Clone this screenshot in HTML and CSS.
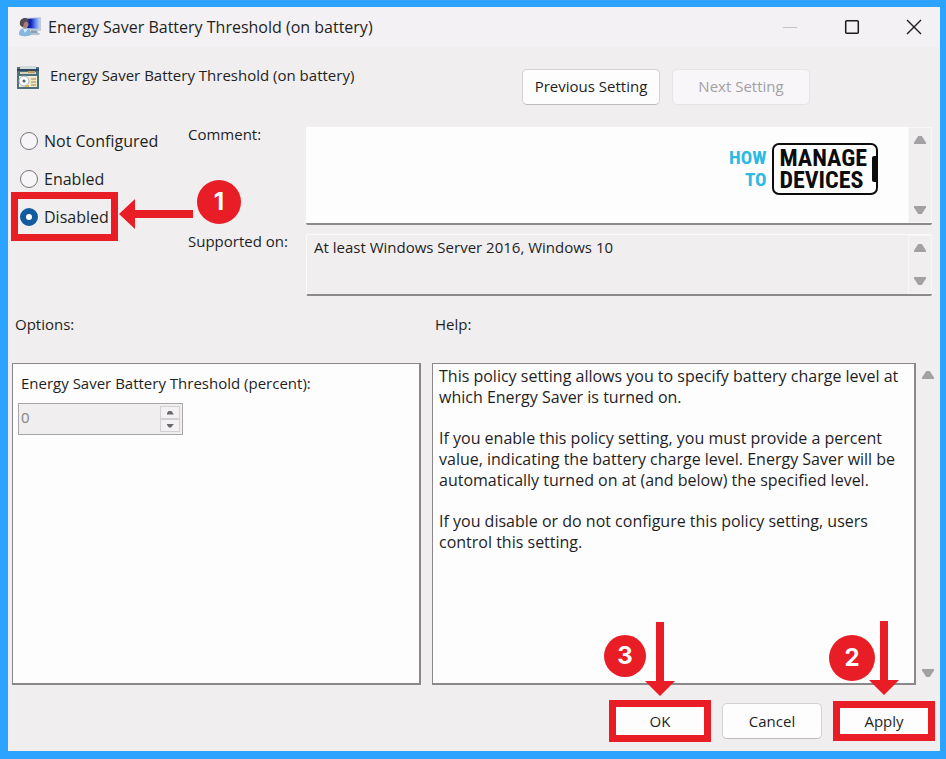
FILE: index.html
```html
<!DOCTYPE html>
<html lang="en">
<head>
  <meta charset="UTF-8">
  <meta name="viewport" content="width=device-width, initial-scale=1.0">
  <title>Energy Saver Battery Threshold (on battery)</title>
  <link rel="stylesheet" href="styles.css">
</head>
<body>
  <div class="dialog">
    <header class="title-bar">
      <svg class="title-icon" width="24" height="22" viewBox="0 0 24 22" aria-hidden="true">
        <defs>
          <linearGradient id="screen" x1="0" y1="0" x2="1" y2="0">
            <stop offset="0" stop-color="#0a1280"/>
            <stop offset="0.4" stop-color="#1226c8"/>
            <stop offset="0.7" stop-color="#5f80e6"/>
            <stop offset="1" stop-color="#a8c4f4"/>
          </linearGradient>
        </defs>
        <path d="M13 14h6l1 4h-8z" fill="#8f9fb8"/>
        <path d="M11 17h11l-1 2H11z" fill="#b4bfd0"/>
        <path d="M6 2l17-1v14l-15-1z" fill="#c3cbd9"/>
        <path d="M8 3l13-1v11L9 12z" fill="url(#screen)"/>
        <path d="M1 18c0-4 3-6 6-6s6 2 6 6c0 3-12 3-12 0z" fill="#86b6dc"/>
        <path d="M5 13l2 4 3-4z" fill="#d9eaf6"/>
        <circle cx="7" cy="8.500" r="3.500" fill="#a98070"/>
        <path d="M2 9c-1-6 3-7 5-7 3 0 4 2 4 4-3-1-4 0-5 1l-1 4c-1 0-2-1-3-2z" fill="#514a52"/>
      </svg>
      <h1 class="title-text">Energy Saver Battery Threshold (on battery)</h1>
      <div class="window-controls">
        <button type="button" class="window-btn" aria-label="Minimize" disabled>
          <svg width="16" height="16" viewBox="0 0 16 16"><path d="M1 8.500h14" stroke="#c4c2c4" fill="none"/></svg>
        </button>
        <button type="button" class="window-btn" aria-label="Maximize">
          <svg width="16" height="16" viewBox="0 0 16 16"><rect x="1.700" y="1.700" width="12.600" height="12.600" rx="1" stroke="#1b1b1b" stroke-width="1.500" fill="none"/></svg>
        </button>
        <button type="button" class="window-btn" aria-label="Close">
          <svg width="16" height="16" viewBox="0 0 16 16"><path d="M1 1l14 14M15 1L1 15" stroke="#1b1b1b" stroke-width="1.400" fill="none"/></svg>
        </button>
      </div>
    </header>

    <div class="setting-header">
      <svg class="setting-icon" width="24" height="24" viewBox="0 0 24 24" aria-hidden="true">
        <rect x="1" y="1" width="22" height="22" fill="#4f7078"/>
        <rect x="4" y="0" width="16" height="3" fill="#d3dadd"/>
        <rect x="1" y="3" width="22" height="2" fill="#30485f"/>
        <rect x="4" y="6" width="16" height="2" fill="#d8d0b8"/>
        <rect x="12" y="5" width="7" height="2" fill="#b99f66"/>
        <rect x="3" y="10" width="18" height="11" fill="#efece2"/>
        <circle cx="8" cy="15" r="5" fill="#fcfcfc" stroke="#a7b0b2"/>
        <circle cx="8" cy="15" r="1.500" fill="#4f6065"/>
        <rect x="14" y="11" width="7" height="10" fill="#f3e9c4"/>
        <path d="M15 13h5M15 16h5M15 19h5" stroke="#948a66" stroke-width="1.200"/>
        <rect x="9" y="19" width="4" height="2" fill="#dbb75c"/>
      </svg>
      <h2 class="setting-name">Energy Saver Battery Threshold (on battery)</h2>
      <div class="setting-nav">
        <button type="button" class="btn">Previous Setting</button>
        <button type="button" class="btn" disabled>Next Setting</button>
      </div>
    </div>

    <div class="config">
      <div class="states" role="radiogroup" aria-label="State">
        <label class="state"><input type="radio" name="state" value="not-configured">Not Configured</label>
        <label class="state"><input type="radio" name="state" value="enabled">Enabled</label>
        <div class="marked marked-state">
          <label class="state"><input type="radio" name="state" value="disabled" checked>Disabled</label>
          <svg class="arrow arrow-left" width="74" height="30" viewBox="0 0 74 30" aria-hidden="true"><path d="M0 15L16 0v11h58v8H16v11z" fill="#e91d25"/></svg>
          <span class="step step-1">1</span>
        </div>
      </div>

      <label class="field-label" for="comment">Comment:</label>
      <div class="field">
        <textarea id="comment"></textarea>
        <div class="scrollbar">
          <span class="tri up"></span>
          <span class="tri down"></span>
        </div>
        <div class="logo">
          <div class="logo-howto"><span>HOW</span><span>TO</span></div>
          <div class="logo-phone"><span>MANAGE</span><span>DEVICES</span></div>
        </div>
      </div>

      <label class="field-label" for="supported">Supported on:</label>
      <div class="field readonly">
        <textarea id="supported" readonly>At least Windows Server 2016, Windows 10</textarea>
        <div class="scrollbar">
          <span class="tri up"></span>
          <span class="tri down"></span>
        </div>
      </div>
    </div>

    <main class="panels">
      <h3 class="panel-label">Options:</h3>
      <h3 class="panel-label">Help:</h3>

      <section class="panel options">
        <label for="percent">Energy Saver Battery Threshold (percent):</label>
        <div class="spinner">
          <input type="text" id="percent" value="0" disabled>
          <div class="spinner-btns">
            <button type="button" aria-label="Increase" disabled><span class="tri up"></span></button>
            <button type="button" aria-label="Decrease" disabled><span class="tri down"></span></button>
          </div>
        </div>
      </section>

      <div class="help">
        <section class="panel help-text">
          <p>This policy setting allows you to specify battery charge level at which Energy Saver is turned on.</p>
          <p>If you enable this policy setting, you must provide a percent value, indicating the battery charge level. Energy Saver will be automatically turned on at (and below) the specified level.</p>
          <p>If you disable or do not configure this policy setting, users control this setting.</p>
        </section>
        <div class="scrollbar">
          <span class="tri up"></span>
          <span class="tri down"></span>
        </div>
      </div>
    </main>

    <footer class="actions">
      <div class="marked marked-ok">
        <button type="button" class="btn">OK</button>
        <span class="step step-3">3</span>
        <svg class="arrow arrow-down" width="30" height="74" viewBox="0 0 30 74" aria-hidden="true"><path d="M15 74L0 59h11V0h8v59h11z" fill="#e91d25"/></svg>
      </div>
      <button type="button" class="btn">Cancel</button>
      <div class="marked marked-apply">
        <button type="button" class="btn">Apply</button>
        <span class="step step-2">2</span>
        <svg class="arrow arrow-down" width="30" height="74" viewBox="0 0 30 74" aria-hidden="true"><path d="M15 74L0 59h11V0h8v59h11z" fill="#e91d25"/></svg>
      </div>
    </footer>
  </div>
</body>
</html>
```

FILE: styles.css
```css
* {
  box-sizing: border-box;
}

body {
  margin: 0;
  min-height: 100vh;
  display: flex;
  border: 8px solid #2ba3ff;
  border-width: 7px 6px 8px 8px;
  font-family: "Open Sans", "Noto Sans", sans-serif;
  font-size: 15px;
  line-height: 20px;
  color: #1f1f1f;
}

h1, h2, h3, p {
  margin: 0;
  font-size: inherit;
  font-weight: normal;
}

button, input, textarea {
  font: inherit;
  color: inherit;
}

.dialog {
  flex: 1;
  display: flex;
  flex-direction: column;
  background: #f0eeef;
}

/* Title bar */
.title-bar {
  display: flex;
  align-items: center;
  height: 40px;
  padding: 0 8px 0 10px;
  background: #f3f1f3;
}
.title-text {
  margin-left: 6px;
  font-size: 16px;
}
.window-controls {
  display: flex;
  gap: 26px;
  margin-left: auto;
}
.window-btn {
  display: flex;
  align-items: center;
  justify-content: center;
  width: 36px;
  height: 36px;
  padding: 0;
  border: none;
  background: none;
}

/* Setting name and navigation */
.setting-header {
  display: flex;
  align-items: flex-start;
  padding: 18px 130px 0 8px;
}
.setting-icon {
  margin-top: 1px;
}
.setting-name {
  margin-left: 10px;
}
.setting-nav {
  display: flex;
  gap: 12px;
  margin: 4px 0 0 auto;
}
.setting-nav .btn {
  width: 138px;
  padding-bottom: 2px;
}

.btn {
  height: 36px;
  padding: 0;
  border: 1px solid #d3d1d3;
  border-bottom-color: #bdbbbd;
  border-radius: 5px;
  background: #fefdfe;
}
.btn:disabled {
  border-color: #e6e4e6;
  background: #f8f6f8;
  color: #a3a1a3;
}

/* State, comment and supported on */
.config {
  display: grid;
  grid-template-columns: 168px 118px 1fr;
  grid-template-rows: 98px 62px;
  gap: 9px 0;
  padding: 22px 8px 0 12px;
}
.states {
  grid-row: 1 / 3;
  display: flex;
  flex-direction: column;
  align-items: flex-start;
  gap: 18px;
  padding-top: 4px;
  font-size: 16px;
}
.state {
  display: flex;
  align-items: center;
  gap: 6px;
}
.state input {
  appearance: none;
  width: 18px;
  height: 18px;
  margin: 0;
  border: 1px solid #77757a;
  border-radius: 50%;
  background: #f7f5f7;
}
.state input:checked {
  border: 6px solid #135ba1;
  background: #fff;
}
.field-label {
  margin-top: -3px;
}
.field {
  position: relative;
  display: flex;
  border-bottom: 2px solid #8b898b;
  border-radius: 2px;
  background: #fefdfe;
}
.field textarea {
  flex: 1;
  min-width: 0;
  padding: 2px 7px;
  border: none;
  background: none;
  resize: none;
  outline: none;
  overflow: hidden;
}
.field.readonly {
  border-top: 1px solid #fbfafb;
  border-left: 1px solid #fbfafb;
  background: #f0eeef;
}
.scrollbar {
  display: flex;
  flex-direction: column;
  justify-content: space-between;
  align-items: center;
  width: 24px;
  padding: 8px 0;
}
.field .scrollbar {
  background: #f0eeef;
  border: 1px solid #f8f7f8;
}

.tri {
  width: 12px;
  height: 8px;
  background: #a3a1a3;
}
.tri.up {
  clip-path: polygon(35% 0, 65% 0, 100% 80%, 100% 100%, 0 100%, 0 80%);
}
.tri.down {
  clip-path: polygon(0 0, 100% 0, 100% 20%, 65% 100%, 35% 100%, 0 20%);
}

/* Logo over the comment box */
.logo {
  position: absolute;
  top: 16px;
  right: 54px;
  display: flex;
  align-items: center;
  gap: 6px;
  font-family: "Roboto Condensed", "Open Sans Condensed", "Liberation Sans Narrow", sans-serif;
  font-weight: bold;
  line-height: 22px;
  pointer-events: none;
}
.logo span {
  display: block;
}
.logo-howto {
  font-size: 19px;
  text-align: right;
  color: #2cb9e2;
}
.logo-phone {
  position: relative;
  padding: 2px 9px 2px 5px;
  border: 2px solid #0c0c0c;
  border-radius: 7px;
  font-size: 24px;
  color: #0c0c0c;
}
.logo-phone::after {
  content: "";
  position: absolute;
  top: 11px;
  right: -1px;
  width: 5px;
  height: 26px;
  border-radius: 2px 0 0 2px;
  background: #0c0c0c;
}

/* Options and help */
.panels {
  flex: 1;
  display: grid;
  grid-template-columns: 409fr 508fr;
  grid-template-rows: 20px 1fr;
  gap: 29px 11px;
  padding: 18px 0 0 4px;
}
.panel-label {
  padding-left: 3px;
}
.panel {
  border: 2px solid #8a888a;
  border-width: 1px 2px 2px 1px;
  background: #fefdfe;
}
.options {
  padding: 9px 5px;
}
.options label {
  display: block;
  padding-left: 3px;
}
.spinner {
  display: flex;
  width: 165px;
  height: 32px;
  margin-top: 10px;
  padding: 2px;
  border: 1px solid #a9a7a9;
  background: #f0eeef;
}
.spinner input {
  flex: 1;
  min-width: 0;
  padding: 0 0 4px;
  border: none;
  background: none;
  color: #858385;
}
.spinner-btns {
  display: flex;
  flex-direction: column;
  width: 20px;
}
.spinner-btns button {
  flex: 1;
  display: flex;
  align-items: center;
  justify-content: center;
  padding: 0;
  border: 1px solid #d2d0d2;
  background: #f3f1f3;
}
.spinner-btns .tri {
  width: 7px;
  height: 4px;
  background: #6a686a;
}
.help {
  display: flex;
}
.help-text {
  flex: 1;
  display: flex;
  flex-direction: column;
  gap: 20px;
  padding: 2px 6px;
  font-size: 16px;
  line-height: 21px;
}

/* Dialog buttons */
.actions {
  display: flex;
  justify-content: flex-end;
  align-items: center;
  gap: 11px;
  padding: 15px 5px 9px;
}
.actions .btn {
  width: 100px;
}

/* Numbered steps: a red frame, an arrow and a badge on each */
.marked {
  position: relative;
}
.marked::after {
  content: "";
  position: absolute;
  inset: 0;
  border: 7px solid #e91d25;
  pointer-events: none;
}
.marked-state::after {
  inset: -15px -9px -14px;
}
.marked-ok .btn,
.marked-apply .btn {
  display: block;
  width: 102px;
  height: 42px;
}
.marked-apply .btn {
  height: 40px;
}
.arrow,
.step {
  position: absolute;
}
.arrow-left {
  left: 99px;
  top: -8px;
}
.arrow-down {
  left: 36px;
  bottom: 46px;
}
.step {
  display: flex;
  align-items: center;
  justify-content: center;
  width: 44px;
  height: 44px;
  border-radius: 50%;
  background: #e91d25;
  color: #fff;
  font-family: Inter, sans-serif;
  font-size: 24px;
  font-weight: bold;
}
.step-1 {
  left: 177px;
  top: -27px;
}
.step-2 {
  left: -4px;
  bottom: 60px;
  width: 46px;
  height: 46px;
}
.step-3 {
  left: -5px;
  bottom: 65px;
  width: 42px;
  height: 42px;
}
```
